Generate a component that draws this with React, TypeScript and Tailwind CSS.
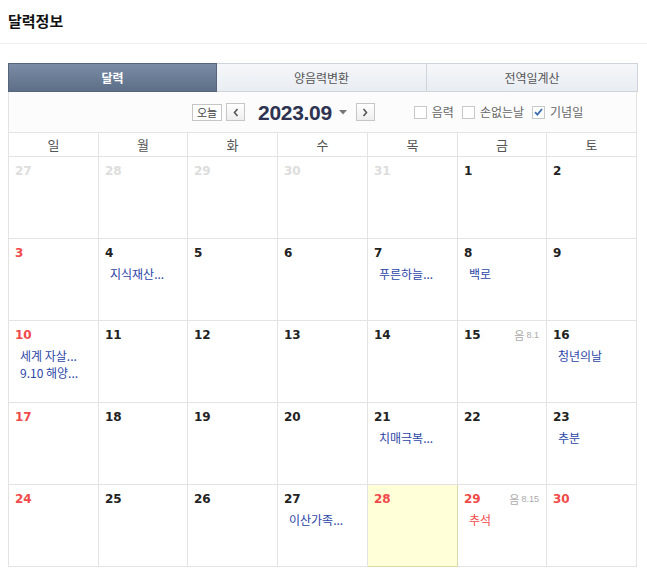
import React from "react";

type Day = {
	d: number;
	kind?: "prev" | "red" | "normal";
	events?: string[];
	eventRed?: boolean;
	lunar?: string;
	today?: boolean;
};

const weeks: Day[][] = [
	[
		{ d: 27, kind: "prev" },
		{ d: 28, kind: "prev" },
		{ d: 29, kind: "prev" },
		{ d: 30, kind: "prev" },
		{ d: 31, kind: "prev" },
		{ d: 1 },
		{ d: 2 },
	],
	[
		{ d: 3, kind: "red" },
		{ d: 4, events: ["지식재산..."] },
		{ d: 5 },
		{ d: 6 },
		{ d: 7, events: ["푸른하늘..."] },
		{ d: 8, events: ["백로"] },
		{ d: 9 },
	],
	[
		{ d: 10, kind: "red", events: ["세계 자살...", "9.10 해양..."] },
		{ d: 11 },
		{ d: 12 },
		{ d: 13 },
		{ d: 14 },
		{ d: 15, lunar: "8.1" },
		{ d: 16, events: ["청년의날"] },
	],
	[
		{ d: 17, kind: "red" },
		{ d: 18 },
		{ d: 19 },
		{ d: 20 },
		{ d: 21, events: ["치매극복..."] },
		{ d: 22 },
		{ d: 23, events: ["추분"] },
	],
	[
		{ d: 24, kind: "red" },
		{ d: 25 },
		{ d: 26 },
		{ d: 27, events: ["이산가족..."] },
		{ d: 28, kind: "red", today: true },
		{ d: 29, kind: "red", lunar: "8.15", events: ["추석"], eventRed: true },
		{ d: 30, kind: "red" },
	],
];

const weekdays = ["일", "월", "화", "수", "목", "금", "토"];

function Checkbox({ label, checked }: { label: string; checked?: boolean }) {
	return (
		<label className="flex items-center gap-[5px] text-[12px] text-[#666]">
			<span className="flex h-[13px] w-[13px] items-center justify-center border border-[#c9c9c9] bg-white">
				{checked && (
					<svg width="9" height="8" viewBox="0 0 9 8">
						<path d="M1 4.2 L3.4 6.6 L8 1" fill="none" stroke="#3d6fb5" strokeWidth="1.8" />
					</svg>
				)}
			</span>
			{label}
		</label>
	);
}

export default function App() {
	return (
		<div
			className="min-h-[579px] bg-white"
			style={{ fontFamily: '"Noto Sans CJK KR", "Liberation Sans", sans-serif' }}
		>
			<div className="h-[44px] border-b border-[#eeeeee] px-2 pt-[10px]">
				<h1 className="text-[15px] font-bold leading-[22px] text-[#111]">달력정보</h1>
			</div>

			<div className="ml-2 mt-[19px] w-[630px]">
				{/* tabs */}
				<div className="flex h-[29px] text-[12px]">
					<div className="flex w-[209px] items-center justify-center border border-[#56657a] bg-gradient-to-b from-[#7b8da6] to-[#5d6e87] font-bold text-white">
						달력
					</div>
					<div className="flex w-[210px] items-center justify-center border-y border-r border-[#cfd4da] bg-gradient-to-b from-[#f5f7fa] to-[#e9edf2] text-[#555]">
						양음력변환
					</div>
					<div className="flex flex-1 items-center justify-center border-y border-r border-[#cfd4da] bg-gradient-to-b from-[#f5f7fa] to-[#e9edf2] text-[#555]">
						전역일계산
					</div>
				</div>

				{/* toolbar */}
				<div className="flex h-[40px] w-[629px] items-center border-x border-[#e3e3e3] bg-[#fcfcfc]">
					<div className="ml-[183px] flex items-center">
						<button className="flex h-[17px] w-[30px] items-center justify-center border border-[#c6c6c6] bg-white text-[11px] leading-none text-[#444]">
							오늘
						</button>
						<button className="ml-[4px] flex h-[18px] w-[19px] items-center justify-center border border-[#c6c6c6] bg-gradient-to-b from-white to-[#eeeeee]">
							<svg width="6" height="9" viewBox="0 0 6 9">
								<path d="M4.5 1 L1.5 4.5 L4.5 8" fill="none" stroke="#555" strokeWidth="1.6" />
							</svg>
						</button>
						<span
							className="ml-[13px] text-[21px] font-bold leading-none tracking-[-0.3px] text-[#2d3350]"
							style={{ fontFamily: '"Liberation Sans", sans-serif' }}
						>
							2023.09
						</span>
						<svg className="ml-[7px]" width="8" height="5" viewBox="0 0 8 5">
							<path d="M0 0 L8 0 L4 4.5 Z" fill="#777" />
						</svg>
						<button className="ml-[9px] flex h-[18px] w-[19px] items-center justify-center border border-[#c6c6c6] bg-gradient-to-b from-white to-[#eeeeee]">
							<svg width="6" height="9" viewBox="0 0 6 9">
								<path d="M1.5 1 L4.5 4.5 L1.5 8" fill="none" stroke="#555" strokeWidth="1.6" />
							</svg>
						</button>
					</div>
					<div className="ml-[39px] flex items-center gap-[8px]">
						<Checkbox label="음력" />
						<Checkbox label="손없는날" />
						<Checkbox label="기념일" checked />
					</div>
				</div>

				{/* calendar grid */}
				<div className="grid w-[629px] grid-cols-[90px_89px_90px_90px_90px_89px_90px] border-l border-t border-[#e3e3e3]">
					{weekdays.map((w) => (
						<div
							key={w}
							className="flex h-[24px] items-center justify-center border-b border-r border-[#e3e3e3] bg-white text-[13px] text-[#555]"
						>
							{w}
						</div>
					))}
					{weeks.flat().map((day, i) => {
						const numColor =
							day.kind === "prev"
								? "text-[#dddddd]"
								: day.kind === "red"
									? "text-[#f04a4a]"
									: "text-[#222]";
						return (
							<div
								key={i}
								className={`relative h-[82px] border-b border-r ${
									day.today
										? "border-[#dcd9a8] bg-[#ffffd8]"
										: "border-[#e3e3e3] bg-white"
								} px-[6px] pt-[6px]`}
							>
								<div className="flex items-start justify-between">
									<span
										className={`text-[12px] font-bold leading-[16px] ${numColor}`}
										style={{ fontFamily: '"DejaVu Sans", "Liberation Sans", sans-serif' }}
									>
										{day.d}
									</span>
									{day.lunar && (
										<span className="mr-[1px] flex items-center gap-[2px] text-[#aaa]">
											<span className="text-[11px] leading-[16px]">음</span>
											<span
												className="text-[9px] leading-[16px]"
												style={{ fontFamily: '"Liberation Sans", sans-serif' }}
											>
												{day.lunar}
											</span>
										</span>
									)}
								</div>
								{day.events && (
									<div className="mt-[4px] pl-[5px]">
										{day.events.map((e) => (
											<div
												key={e}
												className={`whitespace-nowrap text-[12px] leading-[17px] ${
													day.eventRed ? "text-[#f04a4a]" : "text-[#2c46a8]"
												}`}
											>
												{e}
											</div>
										))}
									</div>
								)}
							</div>
						);
					})}
				</div>
			</div>
		</div>
	);
}
